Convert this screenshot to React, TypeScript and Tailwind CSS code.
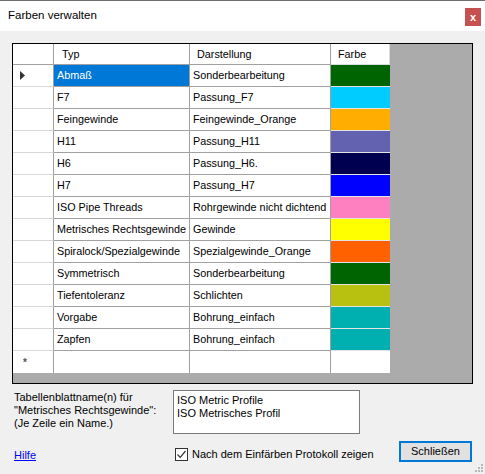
import { useState } from 'react';

const ROWS = [
  { typ: 'Abmaß', darstellung: 'Sonderbearbeitung', farbe: '#006400' },
  { typ: 'F7', darstellung: 'Passung_F7', farbe: '#00ccff' },
  { typ: 'Feingewinde', darstellung: 'Feingewinde_Orange', farbe: '#ffae00' },
  { typ: 'H11', darstellung: 'Passung_H11', farbe: '#6262b0' },
  { typ: 'H6', darstellung: 'Passung_H6.', farbe: '#000050' },
  { typ: 'H7', darstellung: 'Passung_H7', farbe: '#0000ff' },
  { typ: 'ISO Pipe Threads', darstellung: 'Rohrgewinde nicht dichtend', farbe: '#ff80c0' },
  { typ: 'Metrisches Rechtsgewinde', darstellung: 'Gewinde', farbe: '#ffff00' },
  { typ: 'Spiralock/Spezialgewinde', darstellung: 'Spezialgewinde_Orange', farbe: '#ff6000' },
  { typ: 'Symmetrisch', darstellung: 'Sonderbearbeitung', farbe: '#006400' },
  { typ: 'Tiefentoleranz', darstellung: 'Schlichten', farbe: '#b8c010' },
  { typ: 'Vorgabe', darstellung: 'Bohrung_einfach', farbe: '#00b0b0' },
  { typ: 'Zapfen', darstellung: 'Bohrung_einfach', farbe: '#00b0b0' },
];

const font = { fontFamily: '"Liberation Sans", Arial, sans-serif' };

export default function App() {
  const [selected] = useState(0);
  const [protokoll, setProtokoll] = useState(true);

  return (
    <div
      className="w-[485px] h-[474px] bg-[#f0f0f0] flex flex-col text-black relative overflow-hidden"
      style={font}
    >
      {/* Title bar */}
      <div className="h-[31px] bg-white border-t border-[#6e6e6e] flex items-center justify-between pl-2 pr-1 shrink-0">
        <span className="text-[11.5px]">Farben verwalten</span>
        <button className="w-[16px] h-[18px] bg-[#c75050] text-white text-[11px] font-bold leading-none flex items-center justify-center mt-[2px]">
          x
        </button>
      </div>

      {/* Grid */}
      <div className="ml-[12px] mt-[12px] w-[461px] h-[341px] border border-black bg-[#ababab] text-[10.8px]">
        <div className="w-[377px] flex flex-col">
          {/* Header */}
          <div className="flex h-[21px] bg-white">
            <div className="w-[41px] border-r border-b border-[#a0a0a0]" />
            <div className="w-[136px] border-r border-b border-[#a0a0a0] pl-[8px] flex items-center">Typ</div>
            <div className="w-[141px] border-r border-b border-[#a0a0a0] pl-[7px] flex items-center">Darstellung</div>
            <div className="w-[59px] border-r border-b border-[#dcdcdc] pl-[7px] flex items-center">Farbe</div>
          </div>

          {ROWS.map((row, i) => (
            <div key={row.typ} className="flex h-[22px]">
              <div className="w-[41px] bg-white border-r border-b border-[#a0a0a0] border-b-[#d8d8d8] flex items-center pl-[7px]">
                {i === selected && (
                  <svg width="5" height="9" viewBox="0 0 5 9">
                    <path d="M0 0 L5 4.5 L0 9 Z" fill="#333" />
                  </svg>
                )}
              </div>
              <div
                className={`w-[136px] border-r border-b border-[#a0a0a0] pl-[3px] flex items-center whitespace-nowrap overflow-hidden ${
                  i === selected ? 'bg-[#0078d7] text-white' : 'bg-white'
                }`}
              >
                {row.typ}
              </div>
              <div className="w-[141px] bg-white border-r border-b border-[#a0a0a0] pl-[3px] flex items-center whitespace-nowrap overflow-hidden">
                {row.darstellung}
              </div>
              <div className="w-[59px] bg-white border-b border-[#e4e4e4] flex">
                <div className="flex-1" style={{ backgroundColor: row.farbe }} />
              </div>
            </div>
          ))}

          {/* New row */}
          <div className="flex h-[22px] bg-white">
            <div className="w-[41px] border-r border-[#a0a0a0] flex items-center pl-[10px] text-[#555] text-[10px] font-bold">*</div>
            <div className="w-[136px] border-r border-[#a0a0a0]" />
            <div className="w-[141px] border-r border-[#a0a0a0]" />
            <div className="w-[59px]" />
          </div>
        </div>
      </div>

      {/* Names */}
      <div className="flex pl-[14px] mt-[6px] text-[11px]">
        <div className="w-[159px] leading-[13px] pt-[1px]">
          Tabellenblattname(n) für
          <br />
          "Metrisches Rechtsgewinde":
          <br />
          (Je Zeile ein Name.)
        </div>
        <div className="w-[187px] h-[44px] bg-white border border-[#7a7a7a] pl-[3px] pt-[3px] leading-[12.5px]">
          ISO Metric Profile
          <br />
          ISO Metrisches Profil
        </div>
      </div>

      {/* Footer */}
      <div className="flex items-start pl-[14px] mt-[7px] text-[11px]">
        <a href="#" className="w-[161px] mt-[8px] text-[#0000ff] underline leading-[13px]">
          Hilfe
        </a>
        <label className="flex items-center gap-[4px] mt-[7px] flex-1 cursor-default">
          <span
            onClick={() => setProtokoll(!protokoll)}
            className="w-[13px] h-[13px] bg-white border border-[#333] flex items-center justify-center"
          >
            {protokoll && (
              <svg width="11" height="11" viewBox="0 0 11 11">
                <path d="M1.5 5.5 L4.2 8.3 L9.5 2" fill="none" stroke="#333" strokeWidth="1.2" />
              </svg>
            )}
          </span>
          <span className="leading-[13px]">Nach dem Einfärben Protokoll zeigen</span>
        </label>
        <button className="w-[73px] h-[21px] mr-[13px] bg-[#e1e1e1] border-2 border-[#0078d7] text-[11px] flex items-center justify-center">
          Schließen
        </button>
      </div>

      {/* Size grip */}
      <svg className="absolute right-[2px] bottom-[2px]" width="9" height="9" viewBox="0 0 9 9">
        <rect x="7" y="1" width="2" height="2" fill="#b8b8b8" />
        <rect x="4" y="4" width="2" height="2" fill="#b8b8b8" />
        <rect x="7" y="4" width="2" height="2" fill="#b8b8b8" />
        <rect x="1" y="7" width="2" height="2" fill="#b8b8b8" />
        <rect x="4" y="7" width="2" height="2" fill="#b8b8b8" />
        <rect x="7" y="7" width="2" height="2" fill="#b8b8b8" />
      </svg>
    </div>
  );
}
